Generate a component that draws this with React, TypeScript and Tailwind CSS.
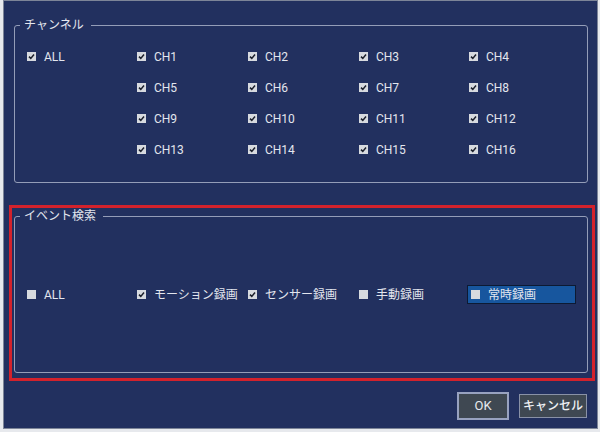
import React from "react";

const FONT = { fontFamily: "Roboto, 'Noto Sans CJK JP', sans-serif" };

function Box({ checked }: { checked: boolean }) {
  return (
    <span className="w-[9px] h-[9px] bg-[#d7dadf] flex items-center justify-center shrink-0">
      {checked && (
        <svg width="9" height="9" viewBox="0 0 9 9">
          <path d="M2 4.6 L3.8 6.4 L7 2.6" stroke="#1b1f2a" strokeWidth="1.5" fill="none" />
        </svg>
      )}
    </span>
  );
}

function Item({ label, checked }: { label: string; checked: boolean }) {
  return (
    <div className="flex items-center gap-[8px] text-[12px] leading-[16px] text-[#e3e6ee] whitespace-nowrap">
      <Box checked={checked} />
      <span>{label}</span>
    </div>
  );
}

function Group({
  title,
  className,
  children,
}: {
  title: string;
  className: string;
  children: React.ReactNode;
}) {
  return (
    <div className={"relative border border-[#949db8] rounded-[3px] " + className}>
      <span className="absolute left-[5px] top-[-9px] pl-[4px] pr-[7px] bg-[#22305f] text-[12px] leading-[16px] text-[#e3e6ee]">
        {title}
      </span>
      {children}
    </div>
  );
}

export default function App() {
  const chans = Array.from({ length: 16 }, (_, i) => `CH${i + 1}`);
  return (
    <div className="w-[600px] h-[432px] bg-[#e7e9ed] pl-[3px]" style={FONT}>
      <div className="w-[595px] h-[429px] bg-[#22305f] border border-[#7d8598] flex flex-col">
        {/* Channel */}
        <Group title="チャンネル" className="mt-[24px] ml-[10px] w-[574px] h-[158px]">
          <div className="grid grid-cols-[110px_111px_111px_110px_1fr] auto-rows-[31px] pt-[15px] pl-[12px] items-center">
            <Item label="ALL" checked />
            {chans.slice(0, 4).map((c) => (
              <Item key={c} label={c} checked />
            ))}
            {[1, 2, 3].map((r) => (
              <React.Fragment key={r}>
                <div />
                {chans.slice(r * 4, r * 4 + 4).map((c) => (
                  <Item key={c} label={c} checked />
                ))}
              </React.Fragment>
            ))}
          </div>
        </Group>

        {/* Event search, highlighted */}
        <div className="mt-[22px] ml-[5px] w-[586px] h-[176px] border-[3px] border-[#d3222c] pl-[2px] pt-[8px]">
          <Group title="イベント検索" className="w-[574px] h-[157px] flex items-center">
            <div className="grid grid-cols-[110px_111px_111px_108px_110px] items-center pl-[12px]">
              <Item label="ALL" checked={false} />
              <Item label="モーション録画" checked />
              <Item label="センサー録画" checked />
              <Item label="手動録画" checked={false} />
              <div className="h-[19px] bg-[#17569e] border border-[#0d1a33] flex items-center pl-[3px] w-[109px]">
                <Item label="常時録画" checked={false} />
              </div>
            </div>
          </Group>
        </div>

        {/* Buttons */}
        <div className="flex justify-end items-center gap-[10px] pr-[10px] mt-[11px]">
          <button className="w-[52px] h-[28px] bg-[#3f4852] border-2 border-[#98a2c0] text-[#e6e9ef] text-[13px]">
            OK
          </button>
          <button className="w-[68px] h-[24px] bg-[#3f4852] border border-[#8991a6] text-[#eef0f4] text-[12px] font-medium">
            キャンセル
          </button>
        </div>
      </div>
    </div>
  );
}
